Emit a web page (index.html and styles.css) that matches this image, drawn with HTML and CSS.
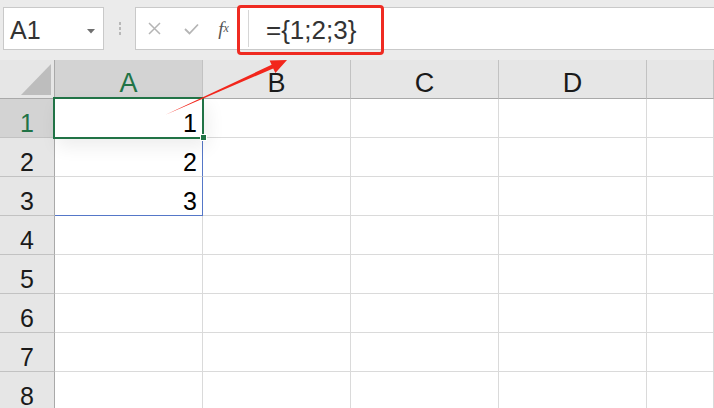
FILE: index.html
```html
<!DOCTYPE html>
<html>
<head>
<meta charset="utf-8">
<link rel="stylesheet" href="styles.css">
</head>
<body>
<div class="app">
  <div class="toolbar">
    <div class="namebox">
      <span class="ref">A1</span>
      <svg class="caret" width="8" height="5" viewBox="0 0 8 5"><path d="M0 0H8L4 4.5Z" fill="#6f6f6f"/></svg>
    </div>
    <div class="grip"><i></i><i></i><i></i></div>
    <div class="fbar">
      <div class="tools">
        <span class="tool"><svg width="13" height="13" viewBox="0 0 13 13"><path d="M1 1L12 12M12 1L1 12" stroke="#b5b5b5" stroke-width="1.5" fill="none"/></svg></span>
        <span class="tool"><svg width="15" height="12" viewBox="0 0 15 12"><path d="M1 6L5.5 10.5L14 1.5" stroke="#b5b5b5" stroke-width="1.8" fill="none"/></svg></span>
        <span class="tool fx">f<small>x</small></span>
      </div>
      <div class="input">={1;2;3}</div>
    </div>
  </div>

  <div class="sheet">
    <div class="hd corner"><svg width="30" height="31" viewBox="0 0 30 31"><path d="M30 0V31H0Z" fill="#bdbdbd"/></svg></div>
    <div class="hd col sel">A</div>
    <div class="hd col">B</div>
    <div class="hd col">C</div>
    <div class="hd col">D</div>
    <div class="hd col"></div>

    <div class="hd row sel">1</div>
    <div class="c num">1</div><div class="c"></div><div class="c"></div><div class="c"></div><div class="c"></div>

    <div class="hd row">2</div>
    <div class="c num blue-r">2</div><div class="c"></div><div class="c"></div><div class="c"></div><div class="c"></div>

    <div class="hd row">3</div>
    <div class="c num blue-r blue-b">3</div><div class="c"></div><div class="c"></div><div class="c"></div><div class="c"></div>

    <div class="hd row">4</div>
    <div class="c"></div><div class="c"></div><div class="c"></div><div class="c"></div><div class="c"></div>

    <div class="hd row">5</div>
    <div class="c"></div><div class="c"></div><div class="c"></div><div class="c"></div><div class="c"></div>

    <div class="hd row">6</div>
    <div class="c"></div><div class="c"></div><div class="c"></div><div class="c"></div><div class="c"></div>

    <div class="hd row">7</div>
    <div class="c"></div><div class="c"></div><div class="c"></div><div class="c"></div><div class="c"></div>

    <div class="hd row">8</div>
    <div class="c"></div><div class="c"></div><div class="c"></div><div class="c"></div><div class="c"></div>
  </div>

  <div class="active"></div>
  <div class="handle"></div>
  <div class="callout"></div>
  <svg class="arrow" width="714" height="408" viewBox="0 0 714 408">
    <polygon points="165,115 273.2,68.4 275.4,73 287,60 269.6,60.6 271.6,64.8" fill="#f2261c"/>
  </svg>
</div>
</body>
</html>
```

FILE: styles.css
```css
html, body {
  margin: 0;
  padding: 0;
}
body {
  width: 714px;
  height: 408px;
  overflow: hidden;
  background: #e8e8e8;
  font-family: "Liberation Sans", Arial, sans-serif;
}
.app {
  position: relative;
  width: 714px;
  height: 408px;
  overflow: hidden;
}

/* toolbar */
.toolbar {
  height: 60px;
  box-sizing: border-box;
  padding: 7px 0 0 3px;
  display: flex;
  align-items: flex-start;
  background: #ebebeb;
}
.namebox {
  width: 101px;
  height: 43px;
  box-sizing: border-box;
  background: #fff;
  border: 1px solid #c9c9c9;
  display: flex;
  align-items: flex-start;
  justify-content: space-between;
  padding: 4px 8px 0 6px;
}
.ref {
  font-size: 25px;
  line-height: 37px;
  color: #333;
}
.caret {
  margin-top: 17px;
}
.grip {
  width: 31px;
  height: 43px;
  display: flex;
  flex-direction: column;
  align-items: center;
  justify-content: center;
  gap: 2px;
}
.grip i {
  width: 2px;
  height: 3px;
  background: #b8b8b8;
}
.fbar {
  flex: 1;
  height: 43px;
  box-sizing: border-box;
  background: #fff;
  border: 1px solid #c9c9c9;
  border-right: none;
  display: flex;
}
.tools {
  width: 112px;
  border-right: 1px solid #d6d6d6;
  display: flex;
  align-items: center;
  margin: 2px 0;
}
.tool {
  width: 37px;
  display: flex;
  justify-content: center;
  align-items: center;
}
.fx {
  font-family: "Liberation Serif", serif;
  font-style: italic;
  font-size: 19px;
  color: #555;
  margin-left: -5px;
}
.fx small {
  font-size: 12px;
  vertical-align: -1px;
}
.input {
  padding: 4px 0 0 17px;
  font-size: 26px;
  line-height: 37px;
  color: #333;
}

/* sheet */
.sheet {
  display: grid;
  grid-template-columns: 55px repeat(4, 148px) 1fr;
  grid-template-rows: repeat(9, 39px);
  background: #fff;
}
.sheet > div {
  box-sizing: border-box;
  font-size: 25px;
  line-height: 28px;
  padding-top: 10px;
  color: #1a1a1a;
}
.hd {
  background: #e6e6e6;
  text-align: center;
}
.sheet > .col {
  border-right: 1px solid #c2c2c2;
  border-bottom: 1px solid #a9a9a9;
  font-size: 27px;
  padding-top: 9px;
}
.row {
  border-right: 1px solid #a9a9a9;
  border-bottom: 1px solid #c2c2c2;
}
.sheet > .corner {
  border-right: 1px solid #a9a9a9;
  border-bottom: 1px solid #a9a9a9;
  display: flex;
  justify-content: flex-end;
  align-items: flex-end;
  padding: 0 3px 3px 0;
}
.corner svg {
  display: block;
}
.hd.sel {
  background: #d3d3d3;
  color: #217346;
}
.c {
  border-right: 1px solid #dadada;
  border-bottom: 1px solid #dadada;
}
.sheet > .num {
  text-align: right;
  padding-right: 5px;
  color: #000;
}
.sheet > .blue-r {
  border-right-color: #5577c8;
}
.sheet > .blue-b {
  border-bottom-color: #5577c8;
}

/* overlays */
.active {
  position: absolute;
  left: 53px;
  top: 97px;
  width: 151px;
  height: 42px;
  box-sizing: border-box;
  border: 2px solid #217346;
  box-shadow: 4px 8px 18px rgba(0, 0, 0, 0.07);
}
.handle {
  position: absolute;
  left: 200px;
  top: 134px;
  width: 5px;
  height: 5px;
  background: #217346;
  border: 1px solid #fff;
}
.callout {
  position: absolute;
  left: 237px;
  top: 5px;
  width: 147px;
  height: 50px;
  box-sizing: border-box;
  border: 3px solid #ef2b22;
  border-radius: 4px;
}
.arrow {
  position: absolute;
  left: 0;
  top: 0;
  pointer-events: none;
}
```
